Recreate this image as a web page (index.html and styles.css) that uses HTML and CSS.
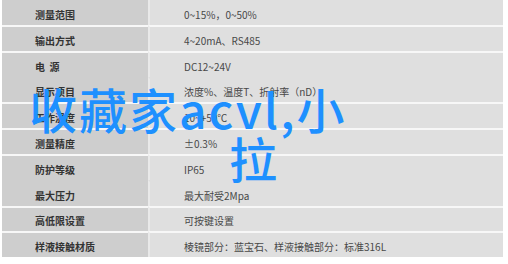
FILE: index.html
```html
<!DOCTYPE html>
<html lang="zh-CN">
<head>
    <meta charset="UTF-8">
    <meta name="viewport" content="width=device-width, initial-scale=1.0">
    <title>技术参数</title>
    <link rel="stylesheet" href="styles.css">
</head>
<body>
    <div class="specs">
        <!-- 参数表 -->
        <div class="specs__row specs__row--first">
            <div class="specs__label">测量范围</div>
            <div class="specs__value">0~15%，0~50%</div>
        </div>
        <div class="specs__row">
            <div class="specs__label">输出方式</div>
            <div class="specs__value">4~20mA、RS485</div>
        </div>
        <div class="specs__row">
            <div class="specs__label">电&nbsp;&nbsp;源</div>
            <div class="specs__value">DC12~24V</div>
        </div>
        <div class="specs__row specs__row--plain">
            <div class="specs__label">显示项目</div>
            <div class="specs__value">浓度%、温度T、折射率（nD）</div>
        </div>
        <div class="specs__row">
            <div class="specs__label">工作温度</div>
            <div class="specs__value">10~+50℃</div>
        </div>
        <div class="specs__row">
            <div class="specs__label">测量精度</div>
            <div class="specs__value">±0.3%</div>
        </div>
        <div class="specs__row">
            <div class="specs__label">防护等级</div>
            <div class="specs__value">IP65</div>
        </div>
        <div class="specs__row specs__row--plain">
            <div class="specs__label">最大压力</div>
            <div class="specs__value">最大耐受2Mpa</div>
        </div>
        <div class="specs__row">
            <div class="specs__label">高低限设置</div>
            <div class="specs__value">可按键设置</div>
        </div>
        <div class="specs__row">
            <div class="specs__label">样液接触材质</div>
            <div class="specs__value">棱镜部分：蓝宝石、样液接触部分：标准316L</div>
        </div>

        <!-- 标题浮层 -->
        <div class="banner">
            <span class="banner__line">收藏家acvl,小</span>
            <span class="banner__line banner__line--second">拉</span>
        </div>
    </div>
</body>
</html>
```

FILE: styles.css
```css
body, html {
    margin: 0;
    padding: 0;
    background: #fff;
}
.specs {
    position: relative;
    width: 501px;
    margin-left: 2px;
    font-family: "Noto Sans CJK SC", sans-serif;
    font-size: 10px;
}
.specs__row {
    display: flex;
    height: 25.8px;
}
.specs__row--first {
    height: 25px;
}
.specs__label,
.specs__value {
    display: flex;
    align-items: center;
    box-sizing: border-box;
    padding-top: 3px;
    border-top: 2px solid #f7f7f7;
}
.specs__row--first .specs__label,
.specs__row--first .specs__value {
    border-top: 0;
}
.specs__row--plain .specs__label,
.specs__row--plain .specs__value {
    border-top-color: transparent;
}
.specs__label {
    width: 146px;
    padding-left: 33px;
    background: #cecece;
    color: #333;
    font-weight: bold;
}
.specs__value {
    flex: 1;
    padding-left: 34px;
    background: #dfdfdf;
    border-left: 2px solid #e9e9e9;
    color: #484848;
}
.banner {
    position: absolute;
    left: 27px;
    top: 84px;
    color: #1e90ff;
    font-size: 48px;
    font-weight: 500;
    letter-spacing: 2px;
    line-height: 49px;
}
.banner__line {
    display: block;
    white-space: nowrap;
}
.banner__line--second {
    padding-left: 200px;
}
```
